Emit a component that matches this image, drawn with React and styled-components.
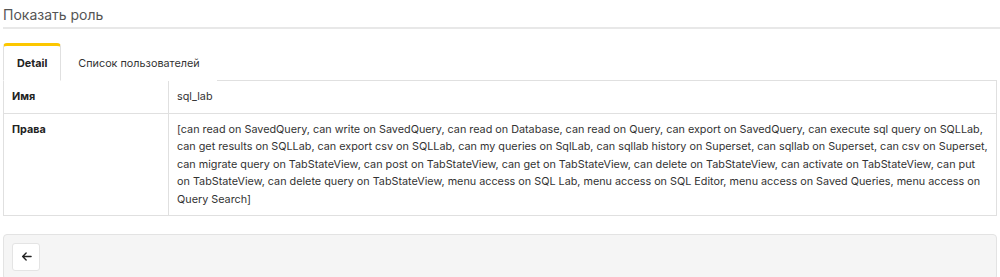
import styled, { createGlobalStyle } from "styled-components";

const GlobalStyle = createGlobalStyle`
  body {
    margin: 0;
    background: #fff;
    font-family: Inter, "Noto Sans", sans-serif;
    color: #333;
  }
`;

const rows = [
  { label: "Имя", value: "sql_lab" },
  {
    label: "Права",
    value:
      "[can read on SavedQuery, can write on SavedQuery, can read on Database, can read on Query, can export on SavedQuery, can execute sql query on SQLLab, can get results on SQLLab, can export csv on SQLLab, can my queries on SqlLab, can sqllab history on Superset, can sqllab on Superset, can csv on Superset, can migrate query on TabStateView, can post on TabStateView, can get on TabStateView, can delete on TabStateView, can activate on TabStateView, can put on TabStateView, can delete query on TabStateView, menu access on SQL Lab, menu access on SQL Editor, menu access on Saved Queries, menu access on Query Search]",
  },
];

export default function App() {
  return (
    <>
      <GlobalStyle />
      <Page>
        <Header>Показать роль</Header>
        <Tabs>
          <Tab $active>Detail</Tab>
          <Tab>Список пользователей</Tab>
        </Tabs>
        <Table>
          <tbody>
            {rows.map((r) => (
              <tr key={r.label}>
                <th>{r.label}</th>
                <td>{r.value}</td>
              </tr>
            ))}
          </tbody>
        </Table>
        <Well>
          <BackButton aria-label="back">
            <svg width="11" height="11" viewBox="0 0 12 12" fill="none">
              <path
                d="M11 6H1.8M5.6 2.2L1.8 6l3.8 3.8"
                stroke="#222"
                strokeWidth="1.5"
                strokeLinecap="round"
                strokeLinejoin="round"
              />
            </svg>
          </BackButton>
        </Well>
      </Page>
    </>
  );
}

const Page = styled.div`
  padding: 0 3px;
  display: flex;
  flex-direction: column;
`;

const Header = styled.h1`
  margin: 0 -3px 0 0;
  padding: 8px 0 5px;
  font-size: 14px;
  line-height: 14px;
  font-weight: 400;
  color: #555;
  border-bottom: 2px solid #e8e8e8;
`;

const Tabs = styled.div`
  margin-top: 14px;
  display: flex;
  border-bottom: 1px solid #e0e0e0;
`;

const Tab = styled.div`
  height: 38px;
  box-sizing: border-box;
  display: flex;
  align-items: center;
  padding: ${(p) => (p.$active ? "0 13px" : "0 16px")};
  font-size: 10.8px;
  font-weight: ${(p) => (p.$active ? 700 : 400)};
  color: ${(p) => (p.$active ? "#222" : "#333")};
  margin-bottom: -1px;
  background: #fff;
  border: 1px solid ${(p) => (p.$active ? "#e0e0e0" : "transparent")};
  border-top: 3px solid ${(p) => (p.$active ? "#fcc700" : "transparent")};
  border-bottom-color: ${(p) => (p.$active ? "#fff" : "transparent")};
  border-radius: 4px 4px 0 0;
`;

const Table = styled.table`
  width: 100%;
  border-collapse: collapse;
  border: 1px solid #e0e0e0;
  border-top: none;
  font-size: 10.8px;

  th,
  td {
    border: 1px solid #e0e0e0;
    padding: 7px 8px 6px;
    line-height: 17.6px;
    text-align: left;
    vertical-align: top;
    color: #333;
  }

  tr:first-child th,
  tr:first-child td {
    border-top: none;
    padding-bottom: 7px;
  }

  th {
    width: 148px;
    font-weight: 700;
    color: #222;
  }
`;

const Well = styled.div`
  margin-top: 18px;
  background: #f5f5f5;
  border: 1px solid #e3e3e3;
  border-radius: 4px;
  padding: 8px;
`;

const BackButton = styled.button`
  width: 28px;
  height: 28px;
  display: flex;
  align-items: center;
  justify-content: center;
  padding: 0;
  background: #fff;
  border: 1px solid #e4e4e4;
  border-radius: 3px;
`;
